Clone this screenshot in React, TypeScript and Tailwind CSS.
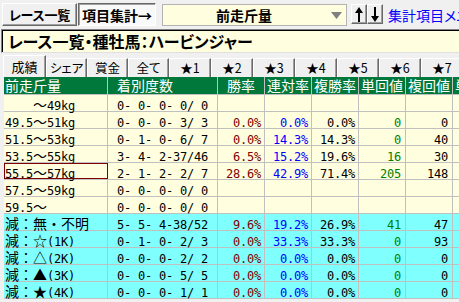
import React from "react";

type Row = {
  label: string;
  rec: string;
  v: [string, string, string, string, string] | null;
  cyan: boolean;
  sel?: boolean;
};

const rows: Row[] = [
  { label: "    ～49kg", rec: "0- 0- 0- 0/ 0", v: null, cyan: false },
  { label: "49.5～51kg", rec: "0- 0- 0- 3/ 3", v: ["0.0%", "0.0%", "0.0%", "0", "0"], cyan: false },
  { label: "51.5～53kg", rec: "0- 1- 0- 6/ 7", v: ["0.0%", "14.3%", "14.3%", "0", "40"], cyan: false },
  { label: "53.5～55kg", rec: "3- 4- 2-37/46", v: ["6.5%", "15.2%", "19.6%", "16", "30"], cyan: false },
  { label: "55.5～57kg", rec: "2- 1- 2- 2/ 7", v: ["28.6%", "42.9%", "71.4%", "205", "148"], cyan: false, sel: true },
  { label: "57.5～59kg", rec: "0- 0- 0- 0/ 0", v: null, cyan: false },
  { label: "59.5～", rec: "0- 0- 0- 0/ 0", v: null, cyan: false },
  { label: "減：無・不明", rec: "5- 5- 4-38/52", v: ["9.6%", "19.2%", "26.9%", "41", "47"], cyan: true },
  { label: "減：☆(1K)", rec: "0- 1- 0- 2/ 3", v: ["0.0%", "33.3%", "33.3%", "0", "93"], cyan: true },
  { label: "減：△(2K)", rec: "0- 0- 0- 2/ 2", v: ["0.0%", "0.0%", "0.0%", "0", "0"], cyan: true },
  { label: "減：▲(3K)", rec: "0- 0- 0- 5/ 5", v: ["0.0%", "0.0%", "0.0%", "0", "0"], cyan: true },
  { label: "減：★(4K)", rec: "0- 0- 0- 1/ 1", v: ["0.0%", "0.0%", "0.0%", "0", "0"], cyan: true },
];

function Mixed({ s }: { s: string }) {
  const parts = s.split(/([\x00-\x7f]+)/).filter((p) => p !== "");
  return (
    <>
      {parts.map((p, i) =>
        /^[\x00-\x7f]+$/.test(p) ? (
          <span key={i} className="font-['DejaVu_Sans_Mono',monospace] text-[12px] tracking-[-0.22px]">
            {p}
          </span>
        ) : (
          <span key={i} className="font-['Noto_Sans_CJK_JP',sans-serif] text-[14px]">
            {p}
          </span>
        )
      )}
    </>
  );
}

const numColors = ["text-[#800000]", "text-[#0000ff]", "text-black", "text-[#008000]", "text-black"];

function UpArrow() {
  return (
    <svg width="8" height="15" viewBox="0 0 8 15">
      <polygon points="4,0 8,6 5,6 5,15 3,15 3,6 0,6" fill="#000" />
    </svg>
  );
}
function DownArrow() {
  return (
    <svg width="8" height="15" viewBox="0 0 8 15">
      <polygon points="3,0 5,0 5,9 8,9 4,15 0,9 3,9" fill="#000" />
    </svg>
  );
}

const tabs = ["シェア", "賞金", "全て", "★1", "★2", "★3", "★4", "★5", "★6", "★7"];
const tabW = ["w-[41px]", "w-[41px]", "w-[41px]", "w-[42px]", "w-[42px]", "w-[42px]", "w-[42px]", "w-[42px]", "w-[42px]", "w-[42px]"];

export default function App() {
  return (
    <div className="w-[459px] h-[302px] bg-[#f0f0f0] overflow-hidden text-black font-['Noto_Sans_CJK_JP',sans-serif]">
      {/* top bar */}
      <div className="flex items-start h-[29px] pt-[3px] pl-[2px] [font-feature-settings:'palt'] whitespace-nowrap">
        <div className="w-[75px] shrink-0 h-[23px] flex items-center justify-center bg-[#f0f0f0] border border-t-white border-l-white border-r-[#696969] border-b-[#696969] shadow-[inset_-1px_-1px_0_#a0a0a0] font-bold text-[13px] tracking-[-0.2px] leading-none overflow-hidden">
          レース一覧
        </div>
        <div className="ml-[1px] shrink-0 w-[78px] h-[23px] flex items-center justify-center bg-[#f9f9f9] border border-t-[#696969] border-l-[#696969] border-r-white border-b-white shadow-[inset_1px_1px_0_#a0a0a0] font-bold text-[14px] leading-none">
          項目集計→
        </div>
        <div className="ml-[6px] shrink-0 mt-[1px] w-[185px] h-[22px] flex items-center bg-[#ffffe0] border border-[#b4b4b4]">
          <span className="flex-1 text-center font-bold text-[14px] leading-none pr-[6px]">前走斤量</span>
          <svg width="11" height="7" viewBox="0 0 11 7" className="mr-[4px]">
            <polygon points="0,0 11,0 5.5,7" fill="#808080" />
          </svg>
        </div>
        <div className="ml-[4px] shrink-0 mt-[1px] w-[16px] h-[20px] flex items-center justify-center border border-t-white border-l-white border-r-[#696969] border-b-[#696969] shadow-[inset_-1px_-1px_0_#a0a0a0]">
          <UpArrow />
        </div>
        <div className="w-[16px] shrink-0 mt-[1px] h-[20px] flex items-center justify-center border border-t-white border-l-white border-r-[#696969] border-b-[#696969] shadow-[inset_-1px_-1px_0_#a0a0a0]">
          <DownArrow />
        </div>
        <div className="ml-[5px] h-[23px] flex items-center text-[#0000ff] text-[14px] leading-none">
          集計項目メニュー
        </div>
      </div>

      {/* title */}
      <div className="ml-[1px] h-[24px] w-[480px] flex items-center pl-[6px] bg-[#ffffe0] border border-t-[#808080] border-l-[#808080] border-b-[#e0e0e0] border-r-white shadow-[inset_1px_1px_0_#000] [font-feature-settings:'palt']">
        <span className="font-bold text-[16px] leading-none whitespace-nowrap">レース一覧・種牡馬：ハービンジャー</span>
      </div>

      {/* tabs */}
      <div className="flex items-end h-[24px] pl-[3px] whitespace-nowrap [font-feature-settings:'palt']">
        <div className="w-[43px] shrink-0 h-[22px] flex items-center justify-center border border-t-white border-l-white border-r-[#696969] border-b-0 shadow-[inset_-1px_0_0_#a0a0a0] text-[13px] leading-none">
          成績
        </div>
        {tabs.map((t, i) => (
          <div
            key={t}
            className={`${tabW[i]} shrink-0 h-[19px] flex items-center justify-center border border-t-white border-l-white border-r-[#696969] border-b-0 shadow-[inset_-1px_0_0_#a0a0a0] text-[12.5px] leading-none`}
          >
            {t}
          </div>
        ))}
      </div>

      {/* table */}
      <div className="ml-[4px] w-[460px]">
        <div className="flex h-[18px] bg-[#00783c] text-white text-[14px] leading-[17px] border-b border-[#c0c0c0] whitespace-nowrap">
          <div className="w-[104px] shrink-0 border-r border-[#c0c0c0] pl-[1px]">前走斤量</div>
          <div className="w-[110px] shrink-0 border-r border-[#c0c0c0] pl-[9px]">着別度数</div>
          <div className="w-[47px] shrink-0 border-r border-[#c0c0c0] text-center">勝率</div>
          <div className="w-[47px] shrink-0 border-r border-[#c0c0c0] text-center">連対率</div>
          <div className="w-[47px] shrink-0 border-r border-[#c0c0c0] text-center">複勝率</div>
          <div className="w-[47px] shrink-0 border-r border-[#c0c0c0] text-center">単回値</div>
          <div className="w-[47px] shrink-0 border-r border-[#c0c0c0] text-center">複回値</div>
          <div className="flex-1 pl-[2px]">単</div>
        </div>
        {rows.map((r, ri) => (
          <div
            key={ri}
            className={`flex h-[17px] leading-[16px] border-b border-[#c0c0c0] whitespace-pre ${r.cyan ? "bg-[#80ffff]" : "bg-[#ffffe0]"}`}
          >
            <div
              className={`w-[104px] shrink-0 border-r border-[#c0c0c0] pl-[1px] ${r.sel ? "outline outline-1 outline-[#800000] -outline-offset-1" : ""}`}
            >
              <Mixed s={r.label} />
            </div>
            <div className="w-[110px] shrink-0 border-r border-[#c0c0c0] text-center">
              <Mixed s={r.rec} />
            </div>
            {[0, 1, 2, 3, 4].map((c) => (
              <div
                key={c}
                className={`w-[47px] shrink-0 border-r border-[#c0c0c0] text-right ${c < 3 ? "pr-[3px]" : "pr-[4px]"} ${numColors[c]}`}
              >
                {r.v ? <Mixed s={r.v[c]} /> : null}
              </div>
            ))}
            <div className="flex-1" />
          </div>
        ))}
      </div>
    </div>
  );
}
